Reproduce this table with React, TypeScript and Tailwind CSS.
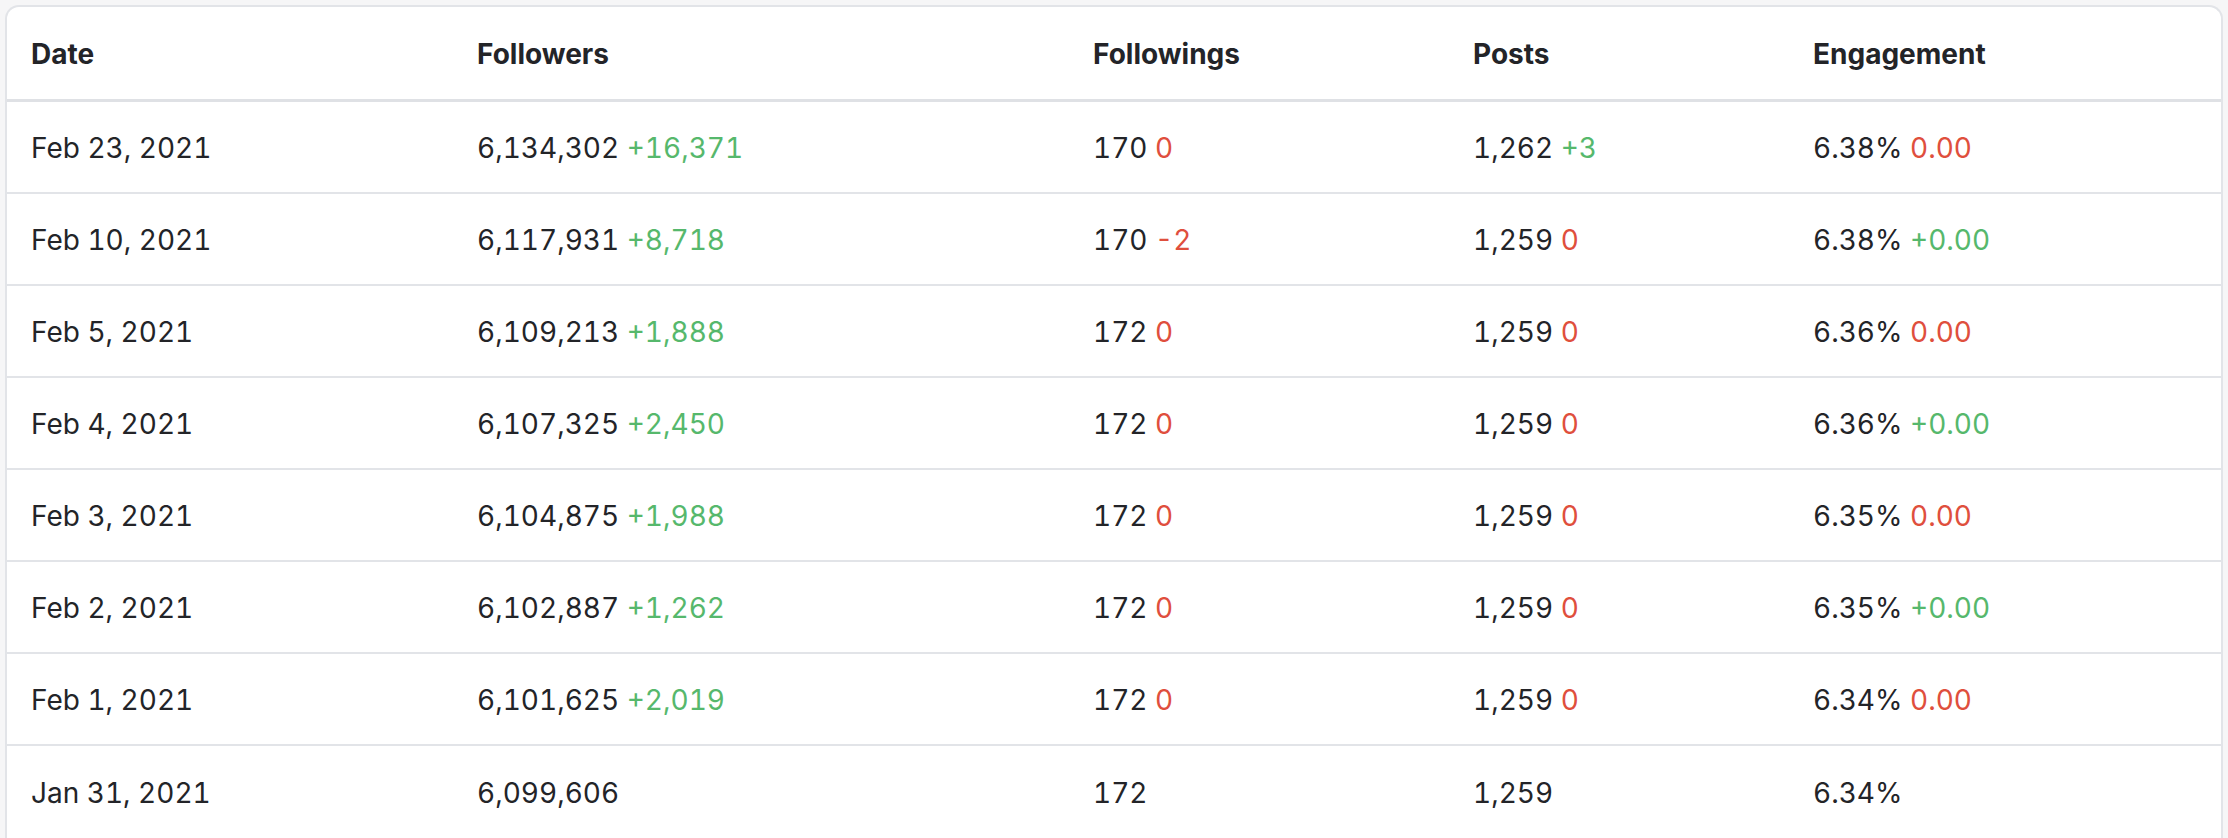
type Delta = { text: string; up: boolean } | null;

type Row = {
  date: string;
  followers: [string, Delta];
  followings: [string, Delta];
  posts: [string, Delta];
  engagement: [string, Delta];
};

const up = (text: string): Delta => ({ text, up: true });
const down = (text: string): Delta => ({ text, up: false });

const rows: Row[] = [
  {
    date: "Feb 23, 2021",
    followers: ["6,134,302", up("+16,371")],
    followings: ["170", down("0")],
    posts: ["1,262", up("+3")],
    engagement: ["6.38%", down("0.00")],
  },
  {
    date: "Feb 10, 2021",
    followers: ["6,117,931", up("+8,718")],
    followings: ["170", down("-2")],
    posts: ["1,259", down("0")],
    engagement: ["6.38%", up("+0.00")],
  },
  {
    date: "Feb 5, 2021",
    followers: ["6,109,213", up("+1,888")],
    followings: ["172", down("0")],
    posts: ["1,259", down("0")],
    engagement: ["6.36%", down("0.00")],
  },
  {
    date: "Feb 4, 2021",
    followers: ["6,107,325", up("+2,450")],
    followings: ["172", down("0")],
    posts: ["1,259", down("0")],
    engagement: ["6.36%", up("+0.00")],
  },
  {
    date: "Feb 3, 2021",
    followers: ["6,104,875", up("+1,988")],
    followings: ["172", down("0")],
    posts: ["1,259", down("0")],
    engagement: ["6.35%", down("0.00")],
  },
  {
    date: "Feb 2, 2021",
    followers: ["6,102,887", up("+1,262")],
    followings: ["172", down("0")],
    posts: ["1,259", down("0")],
    engagement: ["6.35%", up("+0.00")],
  },
  {
    date: "Feb 1, 2021",
    followers: ["6,101,625", up("+2,019")],
    followings: ["172", down("0")],
    posts: ["1,259", down("0")],
    engagement: ["6.34%", down("0.00")],
  },
  {
    date: "Jan 31, 2021",
    followers: ["6,099,606", null],
    followings: ["172", null],
    posts: ["1,259", null],
    engagement: ["6.34%", null],
  },
];

const headers = ["Date", "Followers", "Followings", "Posts", "Engagement"];

function Value({ v }: { v: [string, Delta] }) {
  const [main, delta] = v;
  return (
    <span>
      {main}
      {delta ? (
        <span className={delta.up ? "text-[#56b86c]" : "text-[#df4f3d]"}>
          {" "}
          {delta.text}
        </span>
      ) : null}
    </span>
  );
}

export default function App() {
  return (
    <div className="h-screen overflow-hidden bg-[#f6f6f7] px-[5px] pt-[5px] font-['Inter',sans-serif] text-[#232428]">
      <div className="rounded-t-[14px] border-x-2 border-t-2 border-[#e2e4e8] bg-white">
        <div className="grid h-[95px] grid-cols-[446px_616px_380px_340px_1fr] items-center border-b-[3px] border-[#dfe1e5] pt-px text-[28px] font-bold">
          {headers.map((h) => (
            <div key={h} className="pl-6">
              {h}
            </div>
          ))}
        </div>
        {rows.map((r) => (
          <div
            key={r.date}
            className="grid h-[92px] grid-cols-[446px_616px_380px_340px_1fr] items-center border-b-2 border-[#e2e4e8] pt-[2px] text-[28px] tabular-nums last:border-b-0"
          >
            <div className="pl-6">{r.date}</div>
            <div className="pl-6">
              <Value v={r.followers} />
            </div>
            <div className="pl-6">
              <Value v={r.followings} />
            </div>
            <div className="pl-6">
              <Value v={r.posts} />
            </div>
            <div className="pl-6">
              <Value v={r.engagement} />
            </div>
          </div>
        ))}
      </div>
    </div>
  );
}
